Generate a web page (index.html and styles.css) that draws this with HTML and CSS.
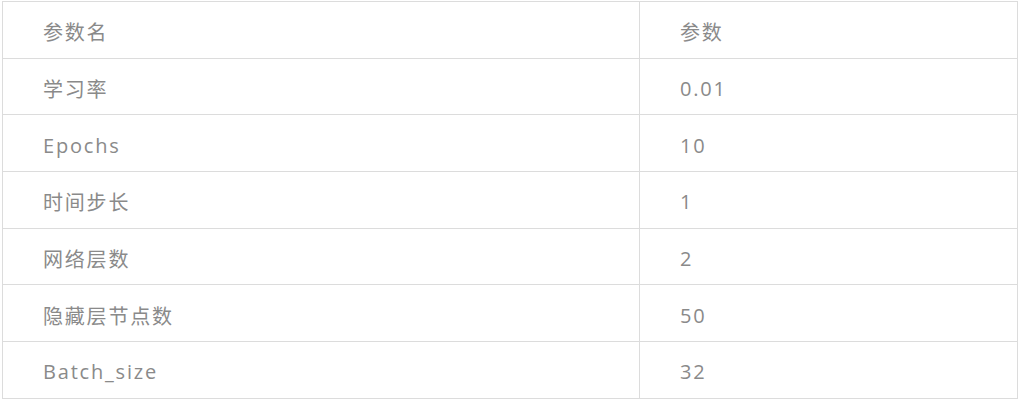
FILE: index.html
```html
<!DOCTYPE html>
<html lang="zh">
<head>
<meta charset="utf-8">
<link rel="stylesheet" href="styles.css">
</head>
<body>
<table class="params">
  <tbody>
    <tr><td class="name">参数名</td><td class="val">参数</td></tr>
    <tr><td class="name">学习率</td><td class="val">0.01</td></tr>
    <tr><td class="name">Epochs</td><td class="val">10</td></tr>
    <tr><td class="name">时间步长</td><td class="val">1</td></tr>
    <tr><td class="name">网络层数</td><td class="val">2</td></tr>
    <tr><td class="name">隐藏层节点数</td><td class="val">50</td></tr>
    <tr><td class="name">Batch_size</td><td class="val">32</td></tr>
  </tbody>
</table>
</body>
</html>
```
FILE: styles.css
```css
html, body {
  margin: 0;
  padding: 0;
  background: #ffffff;
}
body {
  padding: 1px 0 0 2px;
}
.params {
  border-collapse: collapse;
  width: 1016px;
  table-layout: fixed;
  font-family: "Open Sans", "Noto Sans CJK SC", sans-serif;
  font-size: 20px;
  color: #8a8a8a;
  letter-spacing: 1.8px;
}
.params td {
  border: 1px solid #dcdcdc;
  height: 56.7px;
  padding: 4px 0 0 40px;
  box-sizing: border-box;
  vertical-align: middle;
}
.params .name {
  width: 637px;
}
```
